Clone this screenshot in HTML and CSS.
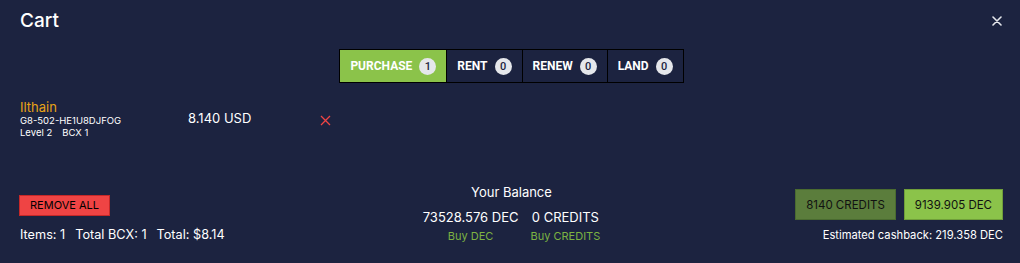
FILE: index.html
```html
<!DOCTYPE html>
<html lang="en">
<head>
    <meta charset="UTF-8">
    <meta name="viewport" content="width=device-width, initial-scale=1.0">
    <title>Cart</title>
    <link rel="stylesheet" href="styles.css">
</head>
<body>
    <div class="modal">
        <div class="modal-head">
            <h1>Cart</h1>
            <button class="close-btn" aria-label="Close">
                <svg width="10" height="10" viewBox="0 0 10 10"><path d="M1 1 L9 9 M9 1 L1 9" stroke="#e5e7eb" stroke-width="1.6" stroke-linecap="round"/></svg>
            </button>
        </div>

        <div class="tabs">
            <button class="tab active">PURCHASE <span class="badge">1</span></button>
            <button class="tab">RENT <span class="badge">0</span></button>
            <button class="tab">RENEW <span class="badge">0</span></button>
            <button class="tab">LAND <span class="badge">0</span></button>
        </div>

        <div class="cart-item">
            <div class="card-info">
                <div class="card-name">Ilthain</div>
                <div class="card-uid">G8-502-HE1U8DJFOG</div>
                <div class="card-meta"><span>Level 2</span><span>BCX 1</span></div>
            </div>
            <div class="card-price">8.140 USD</div>
            <button class="remove-btn" aria-label="Remove">
                <svg width="11" height="11" viewBox="0 0 11 11"><path d="M1 1 L10 10 M10 1 L1 10" stroke="#ef4444" stroke-width="1.3"/></svg>
            </button>
        </div>

        <div class="cart-foot">
            <div class="foot-left">
                <button class="remove-all">REMOVE ALL</button>
                <div class="totals"><span>Items: 1</span><span>Total BCX: 1</span><span>Total: $8.14</span></div>
            </div>
            <div class="balance">
                <div class="balance-title">Your Balance</div>
                <div class="balance-row">
                    <div class="balance-col">
                        <div class="balance-val">73528.576 DEC</div>
                        <a class="buy-link" href="#">Buy DEC</a>
                    </div>
                    <div class="balance-col">
                        <div class="balance-val">0 CREDITS</div>
                        <a class="buy-link" href="#">Buy CREDITS</a>
                    </div>
                </div>
            </div>
            <div class="foot-right">
                <div class="pay-btns">
                    <button class="pay credits">8140 CREDITS</button>
                    <button class="pay dec">9139.905 DEC</button>
                </div>
                <div class="cashback">Estimated cashback: 219.358 DEC</div>
            </div>
        </div>
    </div>
</body>
</html>
```

FILE: styles.css
```css
body {
    margin: 0;
    background-color: #1c2340;
    font-family: Inter, "Liberation Sans", sans-serif;
    color: #ffffff;
}
button {
    font-family: inherit;
    cursor: pointer;
}
.modal {
    height: 263px;
    box-sizing: border-box;
    padding: 9px 17px 21px 20px;
    display: flex;
    flex-direction: column;
}
.modal-head {
    display: flex;
    justify-content: space-between;
    align-items: center;
}
.modal-head h1 {
    margin: 0;
    font-size: 19px;
    font-weight: 500;
    line-height: 24px;
}
.close-btn {
    background: none;
    border: none;
    padding: 0;
    width: 12px;
    height: 12px;
    display: flex;
    align-items: center;
    justify-content: center;
}

/* tabs */
.tabs {
    display: flex;
    justify-content: center;
    margin-top: 16px;
}
.tab {
    height: 34px;
    display: flex;
    align-items: center;
    gap: 7px;
    padding: 0 10px;
    background-color: #1c2340;
    border: 1px solid #000000;
    color: #ffffff;
    font-family: Roboto, sans-serif;
    font-weight: 700;
    font-size: 12px;
}
.tab + .tab {
    border-left: none;
}
.tab.active {
    background-color: #8bc34a;
}
.badge {
    width: 17px;
    height: 17px;
    border-radius: 50%;
    background-color: #e5e7eb;
    color: #1c2340;
    font-size: 11px;
    font-weight: 500;
    display: flex;
    align-items: center;
    justify-content: center;
}

/* item */
.cart-item {
    display: flex;
    align-items: flex-start;
    margin-top: 16px;
}
.card-info {
    width: 168px;
}
.card-name {
    color: #e8a317;
    font-size: 13px;
    line-height: 16px;
}
.card-uid,
.card-meta {
    font-size: 9.5px;
    line-height: 12px;
}
.card-meta span + span {
    margin-left: 10px;
}
.card-price {
    width: 132px;
    font-size: 13px;
    line-height: 16px;
    padding-top: 11px;
}
.remove-btn {
    background: none;
    border: none;
    padding: 0;
    margin-top: 16px;
    line-height: 0;
}

/* footer */
.cart-foot {
    margin-top: auto;
    display: grid;
    grid-template-columns: 1fr auto 1fr;
    align-items: end;
}
.remove-all {
    margin-left: -1px;
    background-color: #ef4444;
    border: 1px solid #c62828;
    color: #000000;
    font-size: 11px;
    padding: 3px 10px;
    line-height: 13px;
}
.totals {
    margin-top: 11px;
    font-size: 12.7px;
    line-height: 15px;
}
.totals span + span {
    margin-left: 10px;
}
.balance {
    text-align: center;
    margin-bottom: -1px;
}
.balance-title {
    font-size: 13px;
    line-height: 15px;
}
.balance-row {
    display: flex;
    gap: 12px;
    margin-top: 9px;
}
.balance-val {
    font-size: 13px;
    line-height: 16px;
}
.buy-link {
    display: block;
    margin-top: 5px;
    color: #7cb342;
    font-size: 11px;
    line-height: 13px;
    text-decoration: none;
}
.foot-right {
    display: flex;
    flex-direction: column;
    align-items: flex-end;
}
.pay-btns {
    display: flex;
    gap: 8px;
}
.pay {
    height: 31px;
    padding: 0 10px;
    font-size: 11.5px;
    color: #111111;
    border: 1px solid #4a6b30;
}
.pay.credits {
    background-color: #5b7d3c;
}
.pay.dec {
    background-color: #8bc34a;
    border-color: #6f9e3a;
}
.cashback {
    margin-top: 9px;
    font-size: 11.2px;
    line-height: 13px;
}
```
